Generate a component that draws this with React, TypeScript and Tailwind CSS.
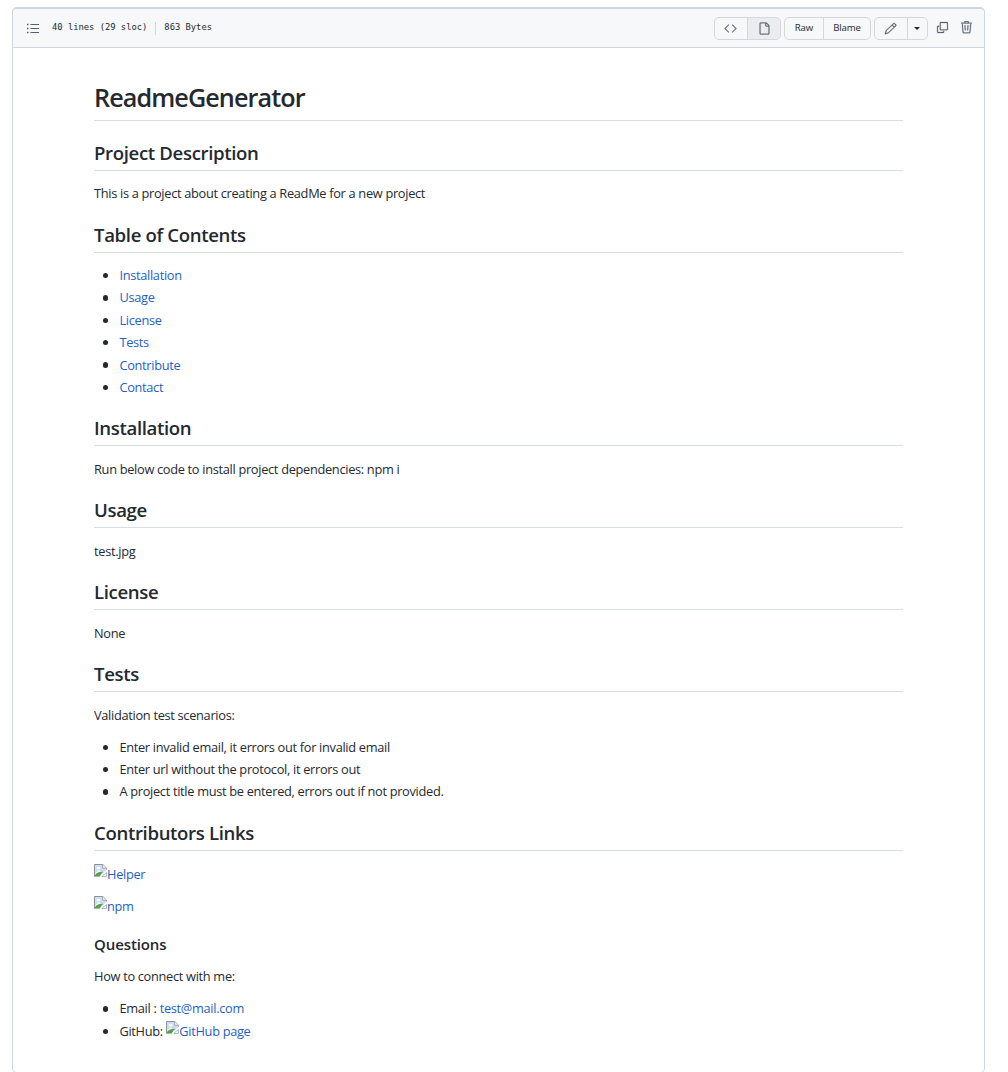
import type { ReactNode } from "react";
import { GoCode, GoCopy, GoFile, GoPencil, GoTrash } from "react-icons/go";

function H2({ children }: { children: ReactNode }) {
  return (
    <h2 className="mt-[19.2px] mb-[13.4px] border-b border-[#d8dee4] pb-[5.16px] text-[18.6px] leading-[24px] font-[560] tracking-[-0.35px]">
      {children}
    </h2>
  );
}

function P({ children }: { children: ReactNode }) {
  return <p className="mb-[12.8px] h-[19.2px] whitespace-nowrap">{children}</p>;
}

function List({ children }: { children: ReactNode }) {
  return <ul className="mb-[12.8px] flex flex-col gap-[3.2px]">{children}</ul>;
}

function Item({ children }: { children: ReactNode }) {
  return (
    <li className="flex h-[19.2px] items-center whitespace-nowrap">
      <span className="mr-[11px] ml-[9px] size-[5.4px] shrink-0 rounded-full bg-[#24292f]" />
      <span className="flex">{children}</span>
    </li>
  );
}

function A({ children }: { children: ReactNode }) {
  return <a className="inline-flex text-[#1f5fc4]">{children}</a>;
}

function BrokenImage() {
  return (
    <svg className="-mt-px h-[14px] w-[13px] shrink-0" viewBox="0 0 13 14" fill="none">
      <path d="M.5.5h8.3l3.7 3.7v8.3H.5z" fill="#c9dcf8" />
      <path d="M1 9.5 5 6l5 5.5H1z" fill="#f4f8fd" />
      <ellipse cx="4.5" cy="4" rx="2" ry="1.2" fill="#fff" />
      <path d="M1 12.3V11c2-2.5 5-3.6 8-3.2L5.6 12.3z" fill="#55a244" />
      <path d="M13 5.2v8H5z" fill="#fff" />
      <path d="M.5 12.8V.5h8.3l3.7 3.7" stroke="#8f9399" />
      <path d="M.5 12.5h5.2M12.5 4v2M7.8 12.5h4.7v-4z" stroke="#a0a4a9" strokeWidth=".8" />
      <path d="M8.7.7v3.5h3.6" fill="#fff" stroke="#8f9399" strokeWidth=".8" />
    </svg>
  );
}

function ListIcon() {
  return (
    <svg className="h-[11px] w-[12px]" viewBox="0 0 12 11" fill="none" stroke="currentColor">
      <path d="M3.4 1.5H12M3.4 5.5H12M3.4 9.5H12" strokeWidth="1.15" />
      <path d="M0 1.5h1.5M0 5.5h1.5M0 9.5h1.5" strokeWidth="1.5" />
    </svg>
  );
}

const contents = ["Installation", "Usage", "License", "Tests", "Contribute", "Contact"];
const scenarios = [
  "Enter invalid email, it errors out for invalid email",
  "Enter url without the protocol, it errors out",
  "A project title must be entered, errors out if not provided.",
];

export default function App() {
  return (
    <div className="h-[1072px] overflow-hidden bg-white pt-[7px] pl-3 font-['Open_Sans','Noto_Sans',sans-serif] text-[12.8px] leading-[19.2px] tracking-[-0.31px] text-[#24292f]">
      <div className="h-[1066px] w-[973px] rounded-[5px] border border-t-2 border-[#d0d7de]">
        <header className="flex h-[39px] items-center rounded-t-[4px] border-b border-[#d0d7de] bg-[#f6f8fa] pr-[11px] pl-[13.5px] text-[#57606a]">
          <ListIcon />
          <div className="ml-[13.5px] flex items-center font-['DejaVu_Sans_Mono',monospace] text-[8.8px] leading-none tracking-normal whitespace-pre text-[#24292f]">
            <span className="-mt-px">40 lines (29 sloc)</span>
            <span className="mx-2 h-[13px] w-px bg-[#d0d7de]" />
            <span className="-mt-px">863 Bytes</span>
          </div>
          <div className="ml-auto flex items-center text-[9.6px] font-medium tracking-[-0.1px] text-[#24292f]">
            <div className="flex h-[23px] w-[67px] overflow-hidden rounded-[5px] border border-[#d5d8da] text-[#57606a]">
              <span className="flex w-[33px] items-center justify-center border-r border-[#d5d8da]">
                <GoCode className="size-[13px] -ml-px stroke-[0.5px]" />
              </span>
              <span className="flex flex-1 items-center justify-center bg-[#ebecf0]">
                <GoFile className="size-[13px] stroke-[0.5px]" />
              </span>
            </div>
            <div className="ml-[3px] flex h-[23px] w-[87px] rounded-[5px] border border-[#d5d8da]">
              <span className="flex w-[39px] items-center justify-center border-r border-[#d5d8da]">Raw</span>
              <span className="flex flex-1 items-center justify-center">Blame</span>
            </div>
            <div className="ml-[3px] flex h-[23px] w-[54px] rounded-[5px] border border-[#d5d8da]">
              <span className="flex w-[33px] items-center justify-center border-r border-[#d5d8da] text-[#57606a]">
                <GoPencil className="size-[13px] -ml-px stroke-[0.5px]" />
              </span>
              <span className="flex flex-1 items-center justify-center">
                <svg className="-ml-px h-[3px] w-[6px]" viewBox="0 0 6 3">
                  <path d="M0 0h6L3 3z" fill="#24292f" />
                </svg>
              </span>
            </div>
            <GoCopy className="-mt-0.5 ml-2 size-[13px] stroke-[0.5px] text-[#57606a]" />
            <GoTrash className="-mt-0.5 ml-[11px] size-[13px] stroke-[0.5px] text-[#57606a]" />
          </div>
        </header>

        <main className="flow-root px-[81px] pt-[33.35px]">
          <h1 className="mb-[13.4px] border-b border-[#d8dee4] pb-[7.08px] text-[25.2px] leading-[32px] font-[560] tracking-[-0.92px]">
            ReadmeGenerator
          </h1>
          <H2>Project Description</H2>
          <P>This is a project about creating a ReadMe for a new project</P>
          <H2>Table of Contents</H2>
          <List>
            {contents.map((c) => (
              <Item key={c}>
                <A>{c}</A>
              </Item>
            ))}
          </List>
          <H2>Installation</H2>
          <P>Run below code to install project dependencies: npm i</P>
          <H2>Usage</H2>
          <P>test.jpg</P>
          <H2>License</H2>
          <P>None</P>
          <H2>Tests</H2>
          <P>Validation test scenarios:</P>
          <List>
            {scenarios.map((s) => (
              <Item key={s}>{s}</Item>
            ))}
          </List>
          <H2>Contributors Links</H2>
          <P>
            <A>
              <BrokenImage />
              Helper
            </A>
          </P>
          <P>
            <A>
              <BrokenImage />
              npm
            </A>
          </P>
          <h3 className="mt-[18.6px] mb-[13.4px] text-[15px] leading-[20px] font-[560] tracking-[-0.1px]">Questions</h3>
          <P>How to connect with me:</P>
          <List>
            <Item>
              <span className="mr-[3.2px]">Email :</span>
              <A>test@mail.com</A>
            </Item>
            <Item>
              <span className="mr-[3.5px]">GitHub:</span>
              <A>
                <BrokenImage />
                GitHub page
              </A>
            </Item>
          </List>
        </main>
      </div>
    </div>
  );
}
